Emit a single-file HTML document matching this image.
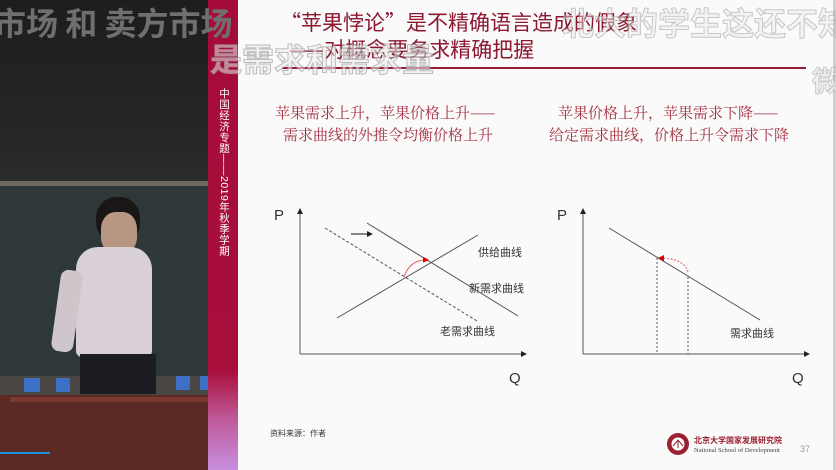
<!DOCTYPE html>
<html><head><meta charset="utf-8"><style>
*{margin:0;padding:0;box-sizing:border-box}
body{width:836px;height:470px;overflow:hidden;position:relative;background:#fff;font-family:"Liberation Sans","Noto Sans CJK SC",sans-serif}
.abs{position:absolute;white-space:nowrap}
.cn{font-family:"Noto Sans CJK SC",sans-serif}
.serif{font-family:"Noto Serif CJK SC",serif}
</style></head><body>
<!-- video left -->
<div class="abs" style="left:0;top:0;width:208px;height:470px;background:linear-gradient(#1d1d1f,#262729 150px,#2a2c2e 183px)"></div>
<div class="abs" style="left:0;top:181px;width:208px;height:5px;background:#6e6a62"></div>
<div class="abs" style="left:0;top:186px;width:208px;height:190px;background:#2f3838"></div>
<div class="abs" style="left:0;top:376px;width:208px;height:22px;background:#4a4644"></div>
<div class="abs" style="left:0;top:395px;width:208px;height:75px;background:#5b2a24"></div>
<div class="abs" style="left:10px;top:397px;width:198px;height:5px;background:#7a3a30"></div>
<!-- blue chairs -->
<div class="abs" style="left:24px;top:378px;width:16px;height:14px;background:#3d6fc4"></div>
<div class="abs" style="left:56px;top:378px;width:14px;height:14px;background:#3d6fc4"></div>
<div class="abs" style="left:176px;top:376px;width:14px;height:14px;background:#3d6fc4"></div>
<div class="abs" style="left:200px;top:376px;width:8px;height:14px;background:#3d6fc4"></div>
<!-- person -->
<div class="abs" style="left:96px;top:197px;width:44px;height:46px;border-radius:45%;background:#1a1616"></div>
<div class="abs" style="left:101px;top:212px;width:36px;height:42px;border-radius:40%;background:#b89684"></div>
<div class="abs" style="left:76px;top:247px;width:76px;height:110px;border-radius:22px 22px 6px 6px;background:#d8d0d6"></div>
<div class="abs" style="left:56px;top:270px;width:22px;height:82px;border-radius:8px;background:#cfc6cc;transform:rotate(8deg)"></div>
<div class="abs" style="left:80px;top:354px;width:76px;height:40px;background:#1c1c22"></div>
<div class="abs" style="left:0;top:452px;width:50px;height:2px;background:#1b8fe0"></div>
<!-- red bar -->
<div class="abs" style="left:208px;top:0;width:30px;height:470px;background:linear-gradient(#a50c3a 0,#a80f3b 370px,#c05a9a 420px,#c78fe0 470px)"></div>
<div class="abs" style="left:216px;top:88px;width:14px;font-size:10.5px;line-height:12.5px;color:#fff;writing-mode:vertical-rl;letter-spacing:0.5px">中国经济专题——2019年秋季学期</div>
<!-- slide -->
<div class="abs" style="left:238px;top:0;width:595px;height:470px;background:#fafafa"></div>
<div class="abs" style="left:833px;top:0;width:3px;height:470px;background:#cfcfcf"></div>
<div class="abs cn" style="left:280px;top:7px;font-size:21px;line-height:30px;color:#8c1830">“苹果悖论”是不精确语言造成的假象</div>
<div class="abs cn" style="left:289px;top:34px;font-size:21px;line-height:30px;color:#8c1830">——对概念要务求精确把握</div>
<div class="abs" style="left:282px;top:67px;width:524px;height:1.5px;background:#9a1d38"></div>
<div class="abs serif" style="left:275px;top:102px;font-size:15px;color:#a32f3f">苹果需求上升，苹果价格上升——</div>
<div class="abs serif" style="left:283px;top:124px;font-size:15px;color:#a32f3f">需求曲线的外推令均衡价格上升</div>
<div class="abs serif" style="left:558px;top:102px;font-size:15px;color:#a32f3f">苹果价格上升，苹果需求下降——</div>
<div class="abs serif" style="left:549px;top:124px;font-size:15px;color:#a32f3f">给定需求曲线，价格上升令需求下降</div>
<svg class="abs" style="left:0;top:0" width="836" height="470">
<defs><marker id="a" markerWidth="6" markerHeight="6" refX="5" refY="3" orient="auto"><path d="M0,0L6,3L0,6z" fill="#222"/></marker>
<marker id="r" markerWidth="6" markerHeight="6" refX="5" refY="3" orient="auto"><path d="M0,0L6,3L0,6z" fill="#d00"/></marker></defs>
<g stroke="#555" stroke-width="1" fill="none">
<path d="M300,354V209" marker-end="url(#a)"/><path d="M300,354H526" marker-end="url(#a)"/>
<path d="M325,228L477,321" stroke-dasharray="3,2"/>
<path d="M367,223L518,316"/>
<path d="M337,318L478,235"/>
<path d="M351,234H372" stroke="#111" marker-end="url(#a)"/>
<path d="M404,277Q410,259 428,260" stroke="#e06060" marker-end="url(#r)"/>
<path d="M583,354V209" marker-end="url(#a)"/><path d="M583,354H809" marker-end="url(#a)"/>
<path d="M609,228L760,320"/>
<path d="M657,258V354M688,277V354" stroke-dasharray="2,2"/>
<path d="M688,272Q684,258 659,258" stroke="#e06060" stroke-dasharray="2,1.5" marker-end="url(#r)"/>
</g>
<g font-family="Liberation Sans,Noto Sans CJK SC,sans-serif" fill="#333">
<text x="274" y="220" font-size="15">P</text><text x="509" y="383" font-size="15">Q</text>
<text x="557" y="220" font-size="15">P</text><text x="792" y="383" font-size="15">Q</text>
<g font-size="11"><text x="478" y="256">供给曲线</text><text x="469" y="292">新需求曲线</text><text x="440" y="335">老需求曲线</text><text x="730" y="337">需求曲线</text></g>
<text x="270" y="436" font-size="8">资料来源：作者</text>
<text x="800" y="452" font-size="9" fill="#999">37</text>
</g>
<circle cx="678" cy="444" r="11" fill="#9b2030"/><circle cx="678" cy="444" r="6.5" fill="#fff"/>
<path d="M673,446L678,440L683,446M678,440V448" stroke="#9b2030" fill="none"/>
<text x="694" y="443" font-size="8" fill="#9b2030" font-family="Noto Sans CJK SC,sans-serif" font-weight="bold">北京大学国家发展研究院</text>
<text x="694" y="452" font-size="6.5" fill="#444" font-family="Liberation Serif,serif">National School of Development</text>
</svg>
<!-- overlay subtitles -->
<div class="abs cn" style="left:-6px;top:0px;font-size:32px;line-height:44px;font-weight:bold;color:#6f6f6f">市场 和 卖方市场</div>
<div class="abs cn" style="left:210px;top:36px;font-size:32px;line-height:44px;font-weight:bold;color:rgba(235,235,235,.55);-webkit-text-stroke:1px rgba(150,150,150,.6)">是需求和需求量</div>
<div class="abs cn" style="left:562px;top:0px;font-size:32px;line-height:44px;font-weight:bold;color:rgba(235,235,235,.45);-webkit-text-stroke:1px rgba(160,160,160,.55)">北大的学生这还不知</div>
<div class="abs cn" style="left:812px;top:60px;font-size:28px;line-height:40px;font-weight:bold;color:rgba(235,235,235,.5);-webkit-text-stroke:1px rgba(160,160,160,.5)">微</div>
</body></html>
